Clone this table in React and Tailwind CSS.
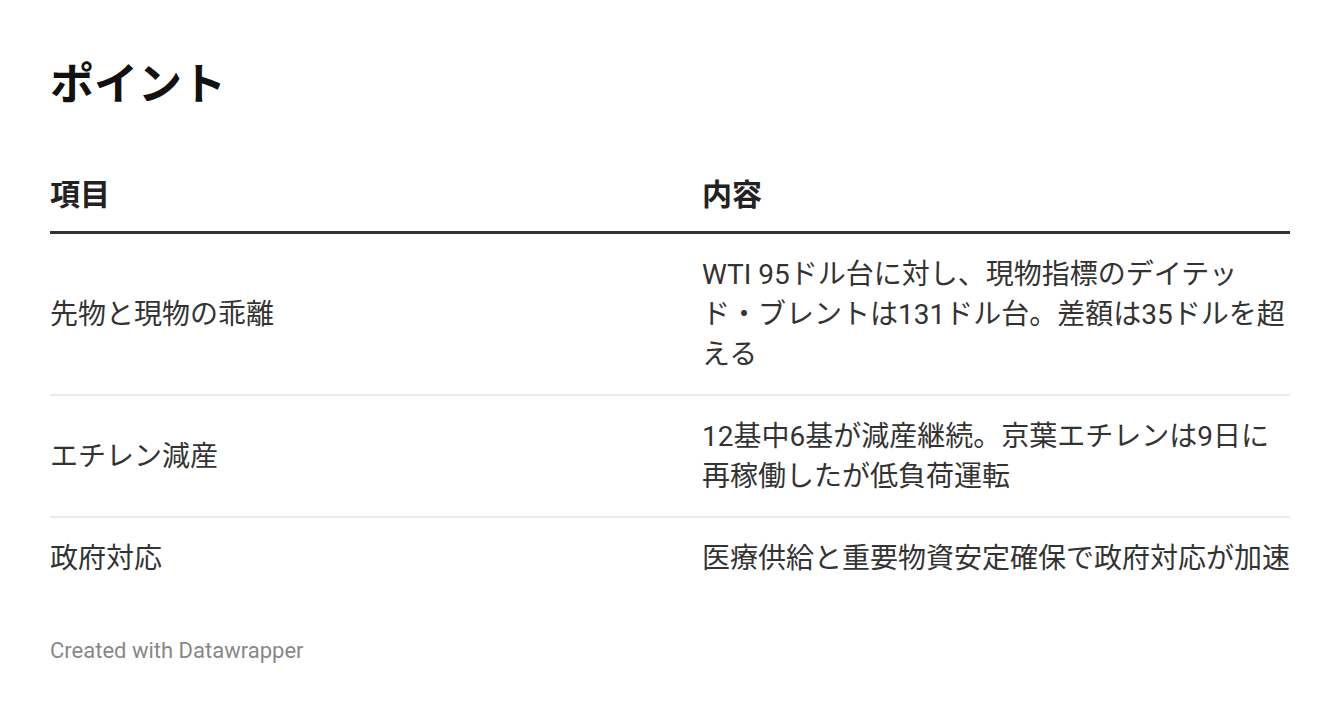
export default function App() {
  const rows = [
    ["先物と現物の乖離", "WTI 95ドル台に対し、現物指標のデイテッド・ブレントは131ドル台。差額は35ドルを超える"],
    ["エチレン減産", "12基中6基が減産継続。京葉エチレンは9日に再稼働したが低負荷運転"],
    ["政府対応", "医療供給と重要物資安定確保で政府対応が加速"],
  ];
  return (
    <div className="min-h-[714px] w-[1340px] bg-white px-[50px] pt-[59px] text-[#333]" style={{ fontFamily: 'Roboto, "Noto Sans CJK JP", sans-serif' }}>
      <h1 className="text-[44px] font-bold leading-[53px] text-[#111]">ポイント</h1>
      <div className="mt-[63px] grid grid-cols-[652px_588px] border-b-[3px] border-[#333] pb-[16px] text-[30px] font-bold leading-[40px] text-[#222]">
        <div>項目</div>
        <div>内容</div>
      </div>
      {rows.map((r, i) => (
        <div
          key={i}
          className={`grid grid-cols-[652px_588px] items-center pt-[21px] pb-[19px] text-[28px] leading-[40px] ${i < rows.length - 1 ? "border-b-2 border-[#ececec]" : ""}`}
        >
          <div>{r[0]}</div>
          <div>{r[1]}</div>
        </div>
      ))}
      <div className="mt-[41px] text-[22px] leading-[24px] text-[#888]">Created with Datawrapper</div>
    </div>
  );
}
